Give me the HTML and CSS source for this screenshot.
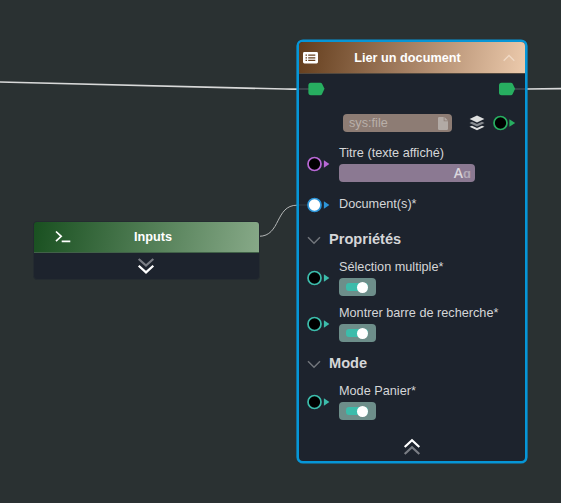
FILE: index.html
```
<!DOCTYPE html>
<html lang="fr">
<head>
<meta charset="utf-8">
<title>Lier un document</title>
<link rel="stylesheet" href="styles.css">
</head>
<body>
<main class="canvas">
  <svg class="wires" width="561" height="503" viewBox="0 0 561 503">
    <path class="wire wire-flow" d="M0 82 L285 89 Q292 89.2 297 89.2"/>
    <path class="wire wire-flow" d="M526 89 L561 88.6"/>
    <path class="wire wire-data" d="M259 236.3 C281 236.3 275 205.2 297 205.2"/>
  </svg>

  <section class="node node-inputs">
    <header class="node-header header-green">
      <svg class="prompt-icon" width="16" height="14" viewBox="0 0 16 14"><path d="M1 1.5 L6.2 6.3 L1 11.1 M6.7 11.3 H15.3"/></svg>
      <h2>Inputs</h2>
    </header>
    <div class="expand">
      <svg class="chevrons" width="18" height="18" viewBox="0 0 18 18"><path class="dim" d="M1.7 2 L9 8.6 L16.3 2"/><path d="M1.7 8.7 L9 15.4 L16.3 8.7"/></svg>
    </div>
  </section>

  <section class="node node-document">
    <header class="node-header header-brown">
      <svg class="list-icon" width="15" height="12" viewBox="0 0 15 12"><rect width="15" height="11.5" rx="1.4" fill="#fff"/><path d="M2.5 3.2 H4 M2.5 5.8 H4 M2.5 8.4 H4 M5.2 3.2 H12.3 M5.2 5.8 H12.3 M5.2 8.4 H12.3" stroke="#67401f" stroke-width="1.3"/></svg>
      <h2>Lier un document</h2>
      <svg class="collapse-icon" width="12" height="8" viewBox="0 0 12 8"><path d="M.7 6.8 L6 1.5 L11.3 6.8"/></svg>
    </header>

    <div class="row row-flow">
      <svg width="26" height="14" viewBox="0 0 26 14"><path d="M0 7 H11" stroke="#434a52" stroke-width="1.5"/><path class="flow" d="M11.9 .7 H21.3 Q22.5 .7 23.1 1.8 L25.5 6.8 L23.1 12 Q22.5 13.2 21.3 13.2 H11.9 Q9.4 13.2 9.4 10.5 V3.4 Q9.4 .7 11.9 .7Z"/></svg>
      <svg width="27" height="14" viewBox="0 0 27 14"><path d="M14 7 H27" stroke="#434a52" stroke-width="1.5"/><path class="flow" d="M3.5 .7 H12.9 Q14.1 .7 14.7 1.8 L17.1 6.8 L14.7 12 Q14.1 13.2 12.9 13.2 H3.5 Q1 13.2 1 10.5 V3.4 Q1 .7 3.5 .7Z"/></svg>
    </div>

    <div class="row row-file">
      <div class="field field-file"><span>sys:file</span>
        <svg width="10" height="13" viewBox="0 0 10 13"><path d="M1.2 0 H5.7 V4.3 H10 V11.8 Q10 13 8.8 13 H1.2 Q0 13 0 11.8 V1.2 Q0 0 1.2 0Z M6.5 0 L10 3.5 H6.5Z" fill="#b2aaa5"/></svg>
      </div>
      <svg class="layers-icon" width="16" height="16" viewBox="0 0 16 16"><path d="M8 .5 L15.4 4 L8 7.4 L.6 4Z M.5 11.7 L3 10.7 L8 13 L13 10.7 L15.5 11.7 L8 15.3Z" fill="#dedfdf"/><path d="M.5 7.9 L3 6.8 L8 9.1 L13 6.8 L15.5 7.9 L8 11.4Z" fill="#878b90"/></svg>
      <svg class="port green" width="25" height="16" viewBox="0 0 25 16"><circle cx="8.5" cy="8" r="6.5"/><path d="M17.4 4.3 L23.2 8 L17.4 11.7Z"/></svg>
    </div>

    <div class="row row-prop row-title">
      <svg class="port purple" width="25" height="16" viewBox="0 0 25 16"><circle cx="8.5" cy="8" r="6.5"/><path d="M17.9 4.3 L23.4 8 L17.9 11.7Z"/></svg>
      <div class="prop">
        <label>Titre (texte affiché)</label>
        <div class="field field-text"><b>A</b><span>ɑ</span></div>
      </div>
    </div>

    <div class="row row-doc">
      <svg class="link-stub" width="8" height="2"><path d="M0 1 H8" stroke="#373e46" stroke-width="1"/></svg>
      <svg class="port blue connected" width="25" height="16" viewBox="0 0 25 16"><circle cx="8.5" cy="8" r="6.5"/><path d="M17.9 4.3 L23.4 8 L17.9 11.7Z"/></svg>
      <label>Document(s)*</label>
    </div>

    <div class="row group group-props">
      <svg class="group-icon" width="14" height="9" viewBox="0 0 14 9"><path d="M1 1.2 L7 7.3 L13 1.2"/></svg>
      <h3>Propriétés</h3>
    </div>

    <div class="row row-prop">
      <svg class="port teal" width="25" height="16" viewBox="0 0 25 16"><circle cx="8.5" cy="8" r="6.5"/><path d="M17.9 4.3 L23.4 8 L17.9 11.7Z"/></svg>
      <div class="prop">
        <label>Sélection multiple*</label>
        <div class="field toggle"><i></i></div>
      </div>
    </div>

    <div class="row row-prop">
      <svg class="port teal" width="25" height="16" viewBox="0 0 25 16"><circle cx="8.5" cy="8" r="6.5"/><path d="M17.9 4.3 L23.4 8 L17.9 11.7Z"/></svg>
      <div class="prop">
        <label>Montrer barre de recherche*</label>
        <div class="field toggle"><i></i></div>
      </div>
    </div>

    <div class="row group group-mode">
      <svg class="group-icon" width="14" height="9" viewBox="0 0 14 9"><path d="M1 1.2 L7 7.3 L13 1.2"/></svg>
      <h3>Mode</h3>
    </div>

    <div class="row row-prop">
      <svg class="port teal" width="25" height="16" viewBox="0 0 25 16"><circle cx="8.5" cy="8" r="6.5"/><path d="M17.9 4.3 L23.4 8 L17.9 11.7Z"/></svg>
      <div class="prop">
        <label>Mode Panier*</label>
        <div class="field toggle"><i></i></div>
      </div>
    </div>

    <footer class="reduce">
      <svg class="chevrons" width="18" height="18" viewBox="0 0 18 18"><path d="M1.7 9 L9 2.2 L16.3 9"/><path class="dim" d="M1.7 16 L9 9.2 L16.3 16"/></svg>
    </footer>
  </section>
</main>
</body>
</html>
```

FILE: styles.css
```
* { box-sizing: border-box; }

body {
  margin: 0;
  background: #2a3132;
  color: #d5d6d8;
  font: 12.7px "Liberation Sans", Arial, sans-serif;
}

svg { display: block; flex: none; }
h2, h3 { margin: 0; }

.canvas {
  position: relative;
  width: 561px;
  height: 503px;
  overflow: hidden;
}

.wires { position: absolute; left: 0; top: 0; }
.wire { fill: none; }
.wire-flow { stroke: #d8d9d9; stroke-width: 1.7; }
.wire-data { stroke: #b5b8b8; stroke-width: 1; }

.node {
  position: absolute;
  display: flex;
  flex-direction: column;
  background: #1d232d;
  overflow: hidden;
}

.node-inputs {
  left: 33px;
  top: 221px;
  width: 227px;
  height: 59px;
  border: 1px solid #242b30;
  border-radius: 4px;
}

.node-document {
  left: 298.5px;
  top: 42px;
  width: 226.5px;
  height: 419px;
  border-radius: 4px;
  box-shadow: 0 0 0 2.6px #0696d7;
}

.node-header {
  display: flex;
  align-items: center;
  position: relative;
  flex: none;
}

.node-header h2 {
  flex: 1;
  color: #fff;
  font-size: 12.7px;
  line-height: 18px;
  text-align: center;
}

.header-green {
  height: 31px;
  padding: 0 21px;
  background: linear-gradient(100deg, #195020, #87a988);
  border-bottom: 1px solid #416148;
}

.header-green h2 { margin-right: 3px; }

.prompt-icon {
  fill: none;
  stroke: #fff;
  stroke-width: 1.7;
}

.expand {
  display: flex;
  flex: 1;
  justify-content: center;
  padding: 4px 1px 0 0;
}

.chevrons {
  fill: none;
  stroke: #fff;
  stroke-width: 2.2;
}

.chevrons .dim { stroke: #7a7d84; }

.header-brown {
  height: 32px;
  padding: 0 10.5px 0 4px;
  background: linear-gradient(100deg, #633d1c, #a78265 50%, #eccaac);
  border-bottom: 1px solid #51483f;
}

.header-brown h2 { padding-right: 5px; }

.collapse-icon {
  fill: none;
  stroke: #f0d9c5;
  stroke-width: 1.3;
}

.row {
  display: flex;
  align-items: center;
  flex: none;
}

.row-flow { height: 30px; justify-content: space-between; }
.flow { fill: #27ae60; }

.row-file { height: 36px; padding: 2px 0 0 44.5px; }

.field {
  display: flex;
  align-items: center;
  height: 18px;
  border-radius: 4px;
}

.field-file {
  width: 108.5px;
  padding: 0 4px 0 6px;
  justify-content: space-between;
  background: #8d7c74;
  color: #b9afa9;
}

.layers-icon { margin-left: 17px; }

.port { stroke-width: 1.7; }
.port circle { fill: #000; stroke: currentColor; }
.port path { fill: currentColor; }
.row-file .port { margin-left: 7px; }
.green { color: #27ae60; }
.purple { color: #b868d5; }
.blue { color: #2d95d8; }
.teal { color: #3cbcab; }
.connected circle { fill: #fff; }

.row-prop { height: 46px; padding-left: 7.5px; gap: 8px; }
.row-title { height: 48px; }
.prop { height: 44px; padding-top: 2px; }
.prop label { display: block; height: 20px; line-height: 18px; white-space: nowrap; }

.field-text {
  width: 136px;
  padding-right: 4px;
  justify-content: flex-end;
  background: #8b7992;
  color: #dad5dc;
  font: 14px/18px "Open Sans", sans-serif;
}

.field-text b { font-weight: 600; }
.field-text span { color: #b5abb9; font-weight: 600; font-size: 13px; }

.row-doc { height: 34px; gap: 8px; }
.link-stub { margin-right: -8.5px; }
.row-doc label { line-height: 18px; padding-bottom: 3px; }

.group { padding-left: 8.5px; gap: 8px; }
.group-props { height: 33px; }
.group-mode { height: 32px; }
.group h3 { font-size: 14.6px; line-height: 20px; }
.group-icon { margin-top: 3px; fill: none; stroke: #70747a; stroke-width: 1.5; }

.toggle { width: 36.5px; padding-left: 7px; background: #6d8e8a; }

.toggle i {
  display: flex;
  align-items: center;
  justify-content: flex-end;
  width: 22px;
  height: 8px;
  border-radius: 3px;
  background: #3cbcab;
}

.toggle i::after {
  content: "";
  width: 11px;
  height: 11px;
  border-radius: 50%;
  background: #fff;
}

.reduce {
  display: flex;
  justify-content: center;
  padding-top: 13px;
}
```
